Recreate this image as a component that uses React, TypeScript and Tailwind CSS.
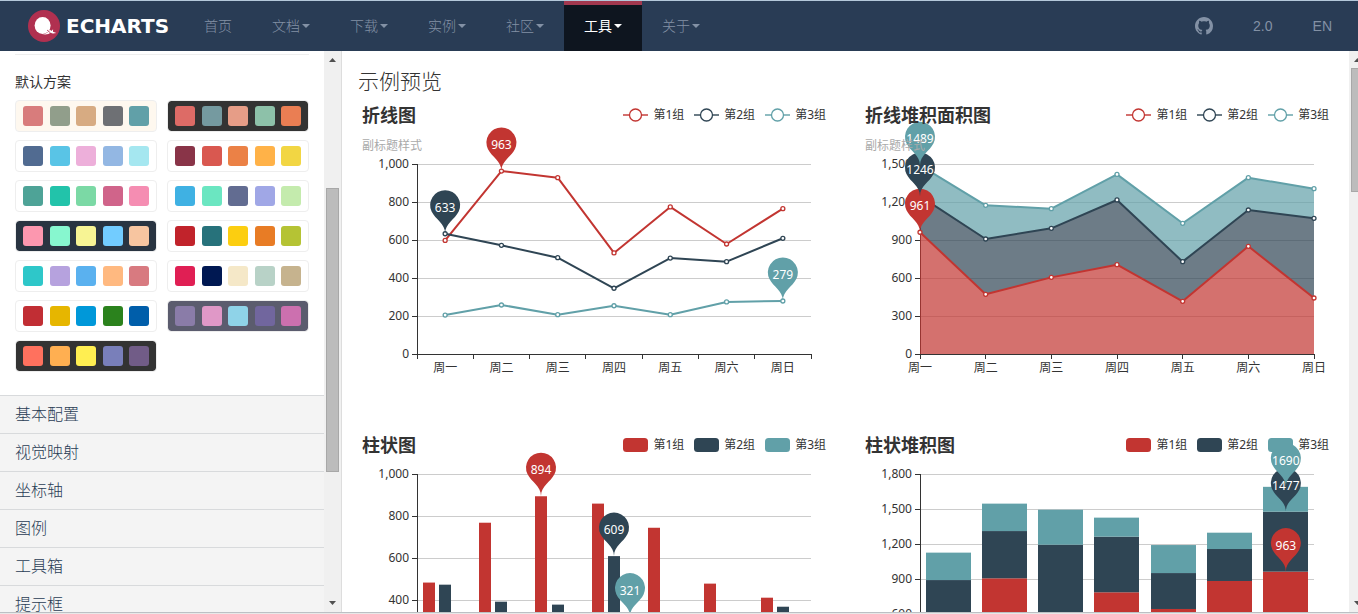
import clsx from 'clsx'
import React from 'react'

const RED = '#c23531'
const NAVY = '#2f4554'
const TEAL = '#61a0a8'
const SERIES_COLORS = [RED, NAVY, TEAL]
const SERIES_NAMES = ['第1组', '第2组', '第3组']
const WEEKDAYS = ['周一', '周二', '周三', '周四', '周五', '周六', '周日']

const navItems = [
  { label: '首页', dropdown: false },
  { label: '文档', dropdown: true },
  { label: '下载', dropdown: true },
  { label: '实例', dropdown: true },
  { label: '社区', dropdown: true },
  { label: '工具', dropdown: true, active: true },
  { label: '关于', dropdown: true }
]

const themes = [
  { background: '#fef8ef', colors: ['#d87c7c', '#919e8b', '#d7ab82', '#6e7074', '#61a0a8'] },
  { background: '#333333', colors: ['#dd6b66', '#759aa0', '#e69d87', '#8dc1a9', '#ea7e53'] },
  { background: '#ffffff', colors: ['#516b91', '#59c4e6', '#edafda', '#93b7e3', '#a5e7f0'] },
  { background: '#ffffff', colors: ['#893448', '#d95850', '#eb8146', '#ffb248', '#f2d643'] },
  { background: '#ffffff', colors: ['#4ea397', '#22c3aa', '#7bd9a5', '#d0648a', '#f58db2'] },
  { background: '#ffffff', colors: ['#3fb1e3', '#6be6c1', '#626c91', '#a0a7e6', '#c4ebad'] },
  { background: '#293441', colors: ['#fc97af', '#87f7cf', '#f7f494', '#72ccff', '#f7c5a0'] },
  { background: '#ffffff', colors: ['#c1232b', '#27727b', '#fcce10', '#e87c25', '#b5c334'] },
  { background: '#ffffff', colors: ['#2ec7c9', '#b6a2de', '#5ab1ef', '#ffb980', '#d87a80'] },
  { background: '#ffffff', colors: ['#e01f54', '#001852', '#f5e8c8', '#b8d2c7', '#c6b38e'] },
  { background: '#ffffff', colors: ['#c12e34', '#e6b600', '#0098d9', '#2b821d', '#005eaa'] },
  { background: '#5b5c6e', colors: ['#8a7ca8', '#e098c7', '#8fd3e8', '#71669e', '#cc70af'] },
  { background: '#333333', colors: ['#ff715e', '#ffaf51', '#ffee51', '#797fba', '#715c87'] }
]

const panels = ['基本配置', '视觉映射', '坐标轴', '图例', '工具箱', '提示框']

const lineData = [
  [598, 963, 928, 532, 774, 579, 765],
  [633, 572, 507, 346, 505, 486, 609],
  [205, 258, 207, 254, 207, 274, 279]
]

// already accumulated, every row holds the upper edge of its layer
const areaData = [
  [961, 471, 605, 705, 416, 850, 442],
  [1246, 908, 992, 1216, 729, 1137, 1071],
  [1489, 1174, 1147, 1418, 1032, 1392, 1305]
]

const barData = [
  [483, 768, 894, 859, 744, 478, 411],
  [473, 392, 378, 609, 290, 310, 368],
  [210, 240, 190, 321, 260, 205, 230]
]

const stackData = [
  [520, 906, 480, 786, 643, 883, 963],
  [891, 1311, 1194, 1263, 951, 1157, 1477],
  [1126, 1546, 1494, 1426, 1191, 1297, 1690]
]

const PLOT_LEFT = 60
const PLOT_TOP = 10
const PLOT_WIDTH = 394
const BAND = PLOT_WIDTH / 7

const Caret = () => (
  <svg width="8" height="4" viewBox="0 0 8 4" fill="currentColor" aria-hidden="true">
    <path d="M0 0h8L4 4z" />
  </svg>
)

const Logo = () => (
  <a href="#" className="flex items-center gap-[6px] pl-7 text-white">
    <svg width="32" height="32" viewBox="0 0 32 32" aria-hidden="true">
      <circle cx="16" cy="16" r="16" fill="#b03050" />
      <ellipse cx="14.6" cy="15.5" rx="8" ry="8.5" fill="#fff" />
      <path d="M14 24c4 .2 6.500-1.600 7.800-4.500l1.600 1.400 1.700-1.700-.1 2.600 3.300 1.300-3.300.4c-.9 0-1.700-.4-2.300-1-1.600 1.600-5 2.600-8.700 1.500z" fill="#fff" />
      <path d="M19 20l3 2.500" stroke="#b03050" strokeWidth="0.8" />
    </svg>
    <span className="font-['DejaVu_Sans',sans-serif] text-xl font-bold leading-none">ECHARTS</span>
  </a>
)

const Header = () => (
  <header className="flex h-[51px] shrink-0 border-t border-[#b4c8da] bg-[#293c55] font-['Liberation_Sans','Noto_Sans_CJK_SC',sans-serif] text-sm text-[#8391a5]">
    <div className="flex w-[184px] shrink-0">
      <Logo />
    </div>
    <nav className="flex flex-1">
      {navItems.map(item => (
        <a
          key={item.label}
          href="#"
          className={clsx(
            'flex items-center gap-[2px] border-t-4 px-5 pb-1 whitespace-nowrap',
            item.active ? 'border-[#a2384f] bg-[#0e151f] text-white' : 'border-transparent font-light'
          )}
        >
          {item.label}
          {item.dropdown && <Caret />}
        </a>
      ))}
    </nav>
    <div className="flex pr-[6px]">
      <a href="#" aria-label="GitHub" className="flex items-center px-5">
        <svg width="18" height="18" viewBox="0 0 16 16" fill="currentColor" aria-hidden="true">
          <path d="M8 0C3.580 0 0 3.580 0 8c0 3.540 2.290 6.530 5.470 7.590.4.070.550-.170.550-.380 0-.190-.010-.820-.010-1.490-2.010.370-2.530-.490-2.690-.940-.090-.230-.480-.940-.820-1.130-.280-.150-.680-.520-.010-.530.630-.010 1.080.580 1.230.820.720 1.210 1.870.870 2.330.660.070-.520.280-.870.510-1.070-1.780-.200-3.640-.890-3.640-3.950 0-.870.310-1.590.820-2.150-.080-.200-.360-1.020.080-2.120 0 0 .670-.210 2.200.820.640-.180 1.320-.270 2-.270s1.360.090 2 .270c1.530-1.040 2.200-.820 2.200-.820.440 1.100.160 1.920.080 2.120.510.560.820 1.270.820 2.150 0 3.070-1.870 3.750-3.650 3.950.290.250.540.730.540 1.480 0 1.070-.010 1.930-.010 2.200 0 .210.150.460.550.380A8.010 8.010 0 0 0 16 8c0-4.420-3.580-8-8-8z" />
        </svg>
      </a>
      <a href="#" className="flex items-center px-5">
        2.0
      </a>
      <a href="#" className="flex items-center px-5">
        EN
      </a>
    </div>
  </header>
)

interface ScrollbarProps {
  className: string
  thumbClassName: string
}

const Scrollbar = ({ className, thumbClassName }: ScrollbarProps) => (
  <div className={clsx('flex shrink-0 flex-col overflow-hidden bg-[#f0f0f0] text-[#505050]', className)}>
    <div className="flex h-[17px] w-[17px] items-center justify-center">
      <svg width="7" height="4" viewBox="0 0 7 4" fill="currentColor" aria-hidden="true">
        <path d="M3.500 0L7 4H0z" />
      </svg>
    </div>
    <div className="w-[17px] flex-1 px-[2px]">
      <div className={clsx('w-[13px] border border-[#a8a8a8] bg-[#bcbcbc]', thumbClassName)} />
    </div>
    <div className="flex h-[19px] w-[17px] items-center justify-center">
      <svg width="7" height="4" viewBox="0 0 7 4" fill="currentColor" aria-hidden="true">
        <path d="M0 0h7L3.500 4z" />
      </svg>
    </div>
  </div>
)

const Sidebar = () => (
  <aside className="flex w-[342px] shrink-0 border-r border-[#dddddd] font-['Liberation_Sans','Noto_Sans_CJK_SC',sans-serif]">
    <div className="min-w-0 flex-1 overflow-hidden">
      <section className="px-[15px] pt-[3px] pb-[23px]">
        <hr className="border-[#eeeeee]" />
        <h4 className="pt-[17px] pb-[8px] text-sm leading-5 text-[#333333]">默认方案</h4>
        <div className="grid grid-cols-2 gap-x-[10px] gap-y-2">
          {themes.map((theme, index) => (
            <button
              key={index}
              type="button"
              aria-label={`方案 ${index + 1}`}
              className="flex h-8 items-center justify-between rounded border border-[#eeeeee] px-[7px]"
              style={{ backgroundColor: theme.background, backgroundClip: 'padding-box' }}
            >
              {theme.colors.map(color => (
                <span key={color} className="h-5 w-5 rounded-[3px]" style={{ backgroundColor: color }} />
              ))}
            </button>
          ))}
        </div>
      </section>
      {panels.map(panel => (
        <button
          key={panel}
          type="button"
          className="block h-[38px] w-full border-t border-[#d8dadc] bg-[#f4f4f4] px-[15px] text-left text-base leading-[37px] font-light text-[#293c55]"
        >
          {panel}
        </button>
      ))}
    </div>
    <Scrollbar className="w-[17px]" thumbClassName="mt-[120px] h-[284px]" />
  </aside>
)

interface LegendProps {
  shape: 'line' | 'bar'
}

const Legend = ({ shape }: LegendProps) => (
  <ul className="flex items-start gap-[10px] pt-[5px] pr-1 text-xs">
    {SERIES_NAMES.map((name, index) => (
      <li key={name} className="flex items-center gap-[5px] leading-[18px]">
        <svg width="25" height="14" viewBox="0 0 25 14" aria-hidden="true">
          {shape === 'line' ? (
            <g stroke={SERIES_COLORS[index]}>
              <path d="M0 7h25" strokeWidth="2" opacity="0.7" />
              <circle cx="12.500" cy="7" r="6" fill="#fff" strokeWidth="1.300" />
            </g>
          ) : (
            <rect width="25" height="14" rx="3.500" fill={SERIES_COLORS[index]} />
          )}
        </svg>
        {name}
      </li>
    ))}
  </ul>
)

interface PinProps {
  x: number
  y: number
  color: string
  value: number
}

const Pin = ({ x, y, color, value }: PinProps) => (
  <g transform={`translate(${x} ${y})`}>
    <path
      d="M-13.550-22.140A15 15 0 1 1 13.550-22.140C9.690-14.010 0-10.500 0 0C0-10.500-9.690-14.010-13.550-22.140Z"
      fill={color}
    />
    <text y="-22" textAnchor="middle" fill="#fff">
      {value}
    </text>
  </g>
)

interface AxesProps {
  height: number
  max: number
  step: number
  boundaryGap?: boolean
  children: React.ReactNode
}

const Axes = ({ height, max, step, boundaryGap = true, children }: AxesProps) => {
  const bottom = PLOT_TOP + height
  const values = Array.from({ length: max / step + 1 }, (_, i) => i * step)
  const toY = (value: number) => bottom - (value / max) * height
  const tickCount = boundaryGap ? 8 : 7
  const tickGap = PLOT_WIDTH / (tickCount - 1)

  return (
    <>
      <g fill="#ccc" shapeRendering="crispEdges">
        {values.slice(1).map(value => (
          <rect key={value} x={PLOT_LEFT} y={toY(value)} width={PLOT_WIDTH} height="1" />
        ))}
      </g>
      <g fill="#333" shapeRendering="crispEdges">
        <rect x={PLOT_LEFT} y={PLOT_TOP} width="1" height={height} />
        <rect x={PLOT_LEFT} y={bottom} width={PLOT_WIDTH + 1} height="1" />
        {values.map(value => (
          <rect key={value} x={PLOT_LEFT - 5} y={toY(value)} width="5" height="1" />
        ))}
        {Array.from({ length: tickCount }, (_, i) => (
          <rect key={i} x={Math.floor(PLOT_LEFT + i * tickGap)} y={bottom} width="1" height="5" />
        ))}
      </g>
      <g fill="#333">
        {values.map(value => (
          <text key={value} x={PLOT_LEFT - 8} y={toY(value) + 4} textAnchor="end">
            {value.toLocaleString('en-US')}
          </text>
        ))}
        {WEEKDAYS.map((day, i) => (
          <text
            key={day}
            x={boundaryGap ? PLOT_LEFT + (i + 0.5) * BAND : PLOT_LEFT + i * tickGap}
            y={bottom + 18}
            textAnchor="middle"
          >
            {day}
          </text>
        ))}
      </g>
      {children}
    </>
  )
}

type Point = [number, number]

interface LineProps {
  points: Point[]
  color: string
}

const Line = ({ points, color }: LineProps) => (
  <g stroke={color}>
    <polyline points={points.join(' ')} fill="none" strokeWidth="2" strokeLinejoin="bevel" />
    {points.map(([x, y]) => (
      <circle key={x} cx={x} cy={y} r="2" fill="#fff" strokeWidth="1.300" />
    ))}
  </g>
)

const LineChart = () => {
  const series = lineData.map(row =>
    row.map((value, i): Point => [PLOT_LEFT + (i + 0.5) * BAND, PLOT_TOP + 190 - value * 0.19])
  )
  const pins = [
    { s: 0, i: 1 },
    { s: 1, i: 0 },
    { s: 2, i: 6 }
  ]
  return (
    <Axes height={190} max={1000} step={200}>
      {series.map((points, s) => (
        <Line key={s} points={points} color={SERIES_COLORS[s]} />
      ))}
      {pins.map(({ s, i }) => (
        <Pin key={s} x={series[s][i][0]} y={series[s][i][1]} color={SERIES_COLORS[s]} value={lineData[s][i]} />
      ))}
    </Axes>
  )
}

const AreaChart = () => {
  const bottom = PLOT_TOP + 190
  const series = areaData.map(row =>
    row.map((value, i): Point => [PLOT_LEFT + (i * PLOT_WIDTH) / 6, bottom - (value / 1500) * 190])
  )
  const floor: Point[] = [
    [PLOT_LEFT, bottom],
    [PLOT_LEFT + PLOT_WIDTH, bottom]
  ]
  return (
    <Axes height={190} max={1500} step={300} boundaryGap={false}>
      {series.map((points, s) => {
        const lower = s === 0 ? floor : series[s - 1]
        return (
          <polygon
            key={s}
            points={[...points, ...[...lower].reverse()].join(' ')}
            fill={SERIES_COLORS[s]}
            fillOpacity="0.7"
          />
        )
      })}
      {series.map((points, s) => (
        <Line key={s} points={points} color={SERIES_COLORS[s]} />
      ))}
      {series.map((points, s) => (
        <Pin key={s} x={points[0][0]} y={points[0][1]} color={SERIES_COLORS[s]} value={areaData[s][0]} />
      ))}
    </Axes>
  )
}

const BarChart = () => {
  const bottom = PLOT_TOP + 210
  const toX = (s: number, i: number) => Math.round(PLOT_LEFT + i * BAND + 5.8 + s * 16.2)
  const pins = [
    { s: 0, i: 2 },
    { s: 1, i: 3 },
    { s: 2, i: 3 }
  ]
  return (
    <Axes height={210} max={1000} step={200}>
      {barData.map((row, s) =>
        row.map((value, i) => (
          <rect
            key={`${s}-${i}`}
            x={toX(s, i)}
            y={bottom - value * 0.21}
            width="12"
            height={value * 0.21}
            fill={SERIES_COLORS[s]}
          />
        ))
      )}
      {pins.map(({ s, i }) => (
        <Pin
          key={s}
          x={toX(s, i) + 6}
          y={bottom - barData[s][i] * 0.21}
          color={SERIES_COLORS[s]}
          value={barData[s][i]}
        />
      ))}
    </Axes>
  )
}

const StackedBarChart = () => {
  const bottom = PLOT_TOP + 210
  const toY = (value: number) => bottom - (value / 1800) * 210
  return (
    <Axes height={210} max={1800} step={300}>
      {stackData.map((row, s) =>
        row.map((value, i) => {
          const base = s === 0 ? 0 : stackData[s - 1][i]
          return (
            <rect
              key={`${s}-${i}`}
              x={Math.round(PLOT_LEFT + i * BAND + 5.6)}
              y={toY(value)}
              width="45"
              height={toY(base) - toY(value)}
              fill={SERIES_COLORS[s]}
            />
          )
        })
      )}
      {stackData.map((row, s) => (
        <Pin key={s} x={PLOT_LEFT + 6.5 * BAND} y={toY(row[6])} color={SERIES_COLORS[s]} value={row[6]} />
      ))}
    </Axes>
  )
}

interface ChartCardProps {
  title: string
  subtitle?: string
  legend: 'line' | 'bar'
  children: React.ReactNode
}

const ChartCard = ({ title, subtitle, legend, children }: ChartCardProps) => (
  <section className="px-[15px] pb-[30px]">
    <div className={clsx('relative z-10 flex justify-between', subtitle ? 'h-[53px]' : 'h-[33px]')}>
      <div className="pt-[5px] pl-[5px]">
        <h3 className="text-lg leading-[18px] font-bold">{title}</h3>
        {subtitle && <p className="mt-[14px] text-xs leading-4 text-[#aaaaaa]">{subtitle}</p>}
      </div>
      <Legend shape={legend} />
    </div>
    <svg
      viewBox={subtitle ? '0 0 473 247' : '0 0 473 267'}
      className="block w-full overflow-visible text-xs"
      role="img"
      aria-label={title}
    >
      {children}
    </svg>
  </section>
)

const Preview = () => (
  <main className="min-w-0 flex-1 overflow-hidden pr-px font-['Noto_Sans','Noto_Sans_CJK_SC',sans-serif] text-[#333333]">
    <h2 className="px-4 pt-4 pb-1 font-['Liberation_Sans','Noto_Sans_CJK_SC',sans-serif] text-[21px] leading-[30px] font-light">
      示例预览
    </h2>
    <div className="grid grid-cols-2">
      <ChartCard title="折线图" subtitle="副标题样式" legend="line">
        <LineChart />
      </ChartCard>
      <ChartCard title="折线堆积面积图" subtitle="副标题样式" legend="line">
        <AreaChart />
      </ChartCard>
      <ChartCard title="柱状图" legend="bar">
        <BarChart />
      </ChartCard>
      <ChartCard title="柱状堆积图" legend="bar">
        <StackedBarChart />
      </ChartCard>
    </div>
  </main>
)

export default function App() {
  return (
    <div className="flex h-screen flex-col overflow-hidden bg-white">
      <Header />
      <div className="flex min-h-0 flex-1">
        <Sidebar />
        <Preview />
        <Scrollbar className="w-[9px]" thumbClassName="h-[124px]" />
      </div>
      <div className="h-[2px] shrink-0 border-t border-[#bcc0c4] bg-[#e8e8e8]" />
    </div>
  )
}
